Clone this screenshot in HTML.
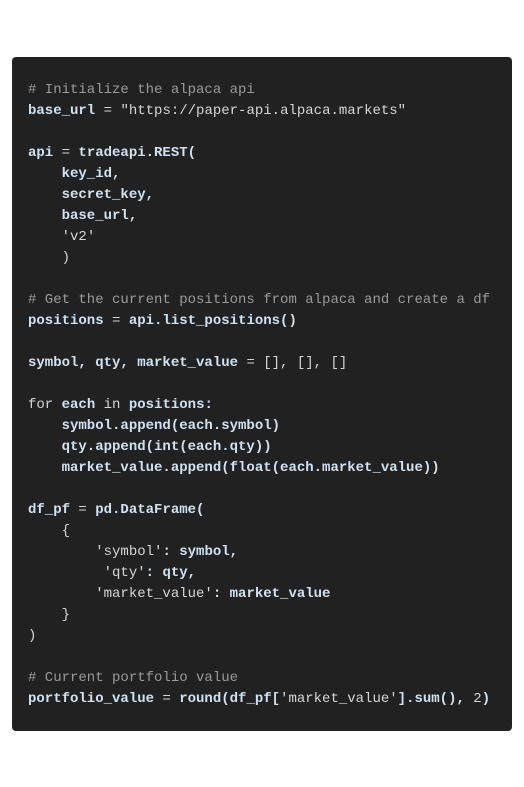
<!DOCTYPE html>
<html><head><meta charset="utf-8"><style>
html,body{margin:0;padding:0;background:#fff;width:524px;height:787px;overflow:hidden}
.box{position:absolute;left:12px;top:57px;width:500px;height:674px;background:#212121;border-radius:4px;box-sizing:border-box;padding:23px 0 0 16px}
pre{margin:0;font-family:"Liberation Mono",monospace;font-size:14px;line-height:21px;color:#cfe2f2;font-weight:bold;white-space:pre}
.c{color:#9a9a9a;font-weight:normal}
.s{color:#d6d6d6;font-weight:normal}
.o{color:#d6d6d6;font-weight:normal}
</style></head><body>
<div class="box"><pre><span class="c"># Initialize the alpaca api</span>
base_url <span class="o">=</span> <span class="s">"https://paper-api.alpaca.markets"</span>

api <span class="o">=</span> tradeapi.REST(
    key_id,
    secret_key,
    base_url,
    <span class="s">'v2'</span>
    <span class="o">)</span>

<span class="c"># Get the current positions from alpaca and create a df</span>
positions <span class="o">=</span> api.list_positions()

symbol, qty, market_value <span class="o">= [], [], []</span>

<span class="o">for</span> each <span class="o">in</span> positions:
    symbol.append(each.symbol)
    qty.append(int(each.qty))
    market_value.append(float(each.market_value))

df_pf <span class="o">=</span> pd.DataFrame(
    <span class="o">{</span>
        <span class="s">'symbol'</span>: symbol,
         <span class="s">'qty'</span>: qty,
        <span class="s">'market_value'</span>: market_value
    <span class="o">}</span>
<span class="o">)</span>

<span class="c"># Current portfolio value</span>
portfolio_value <span class="o">=</span> round(df_pf[<span class="s">'market_value'</span>].sum(), <span class="s">2</span>)</pre></div>
</body></html>
